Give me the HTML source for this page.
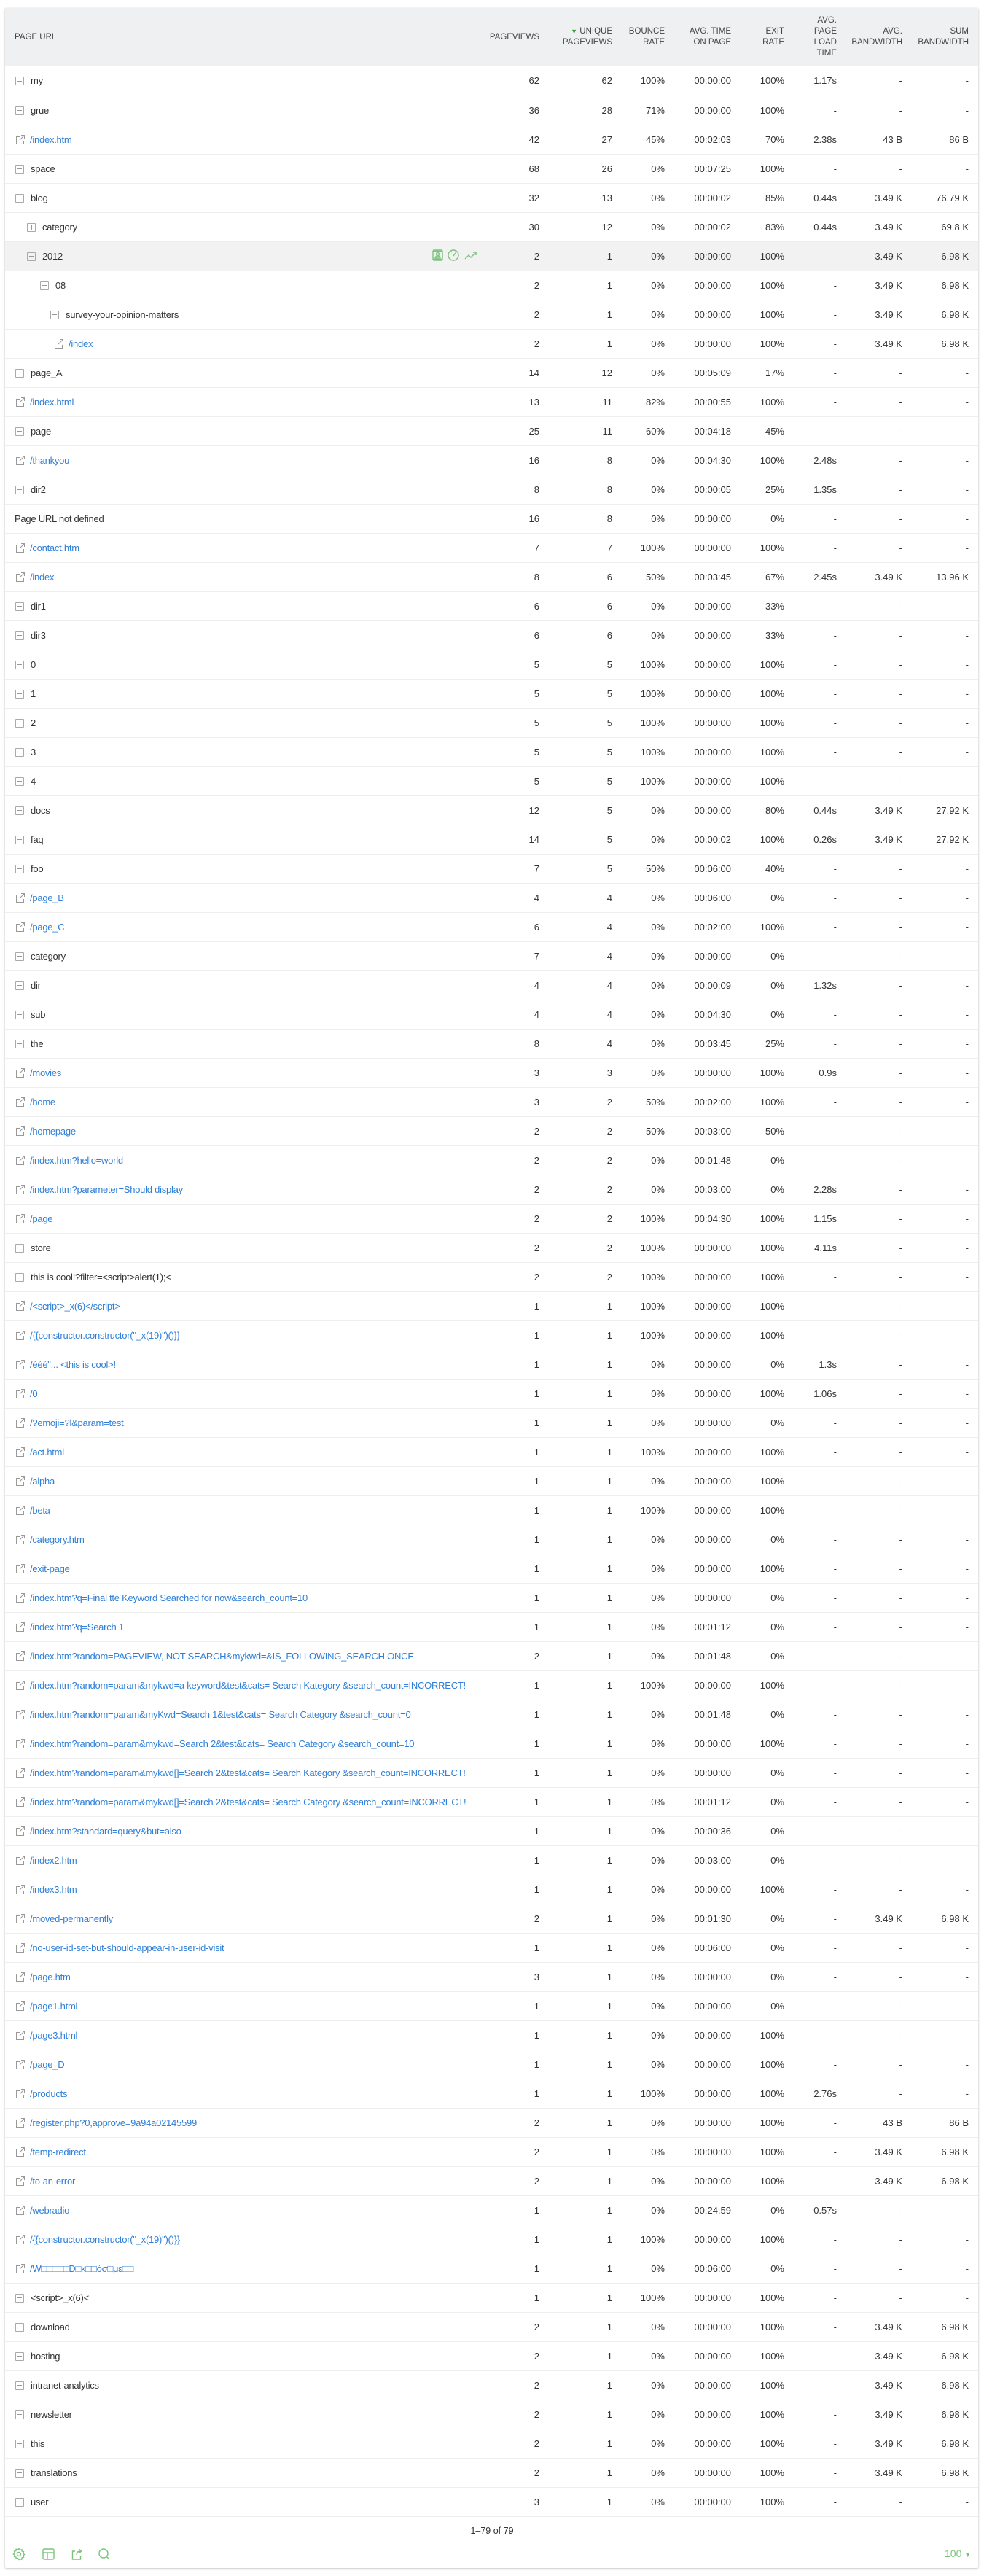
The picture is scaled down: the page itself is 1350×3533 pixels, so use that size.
<!DOCTYPE html>
<html><head><meta charset="utf-8">
<style>
*{box-sizing:border-box;margin:0;padding:0}
body{width:1350px;height:3533px;background:#fff;font-family:"Liberation Sans","Noto Sans CJK SC",sans-serif;font-size:13px;color:#333;position:relative;overflow:hidden}
.card{position:absolute;left:7px;top:11px;width:1335px;height:3511px;background:#fff;box-shadow:0 1px 3px rgba(0,0,0,.25);border-radius:2px}
table{border-collapse:collapse;table-layout:fixed;width:1335px}
th{background:#eef0f2;height:80px;font-weight:normal;font-size:11.5px;color:#444;text-transform:uppercase;text-align:right;line-height:15px;vertical-align:middle;padding:0}
th.u{text-align:left;padding-left:13px}
td{height:40px;border-bottom:1px solid #eee;text-align:right;white-space:nowrap;padding:0;vertical-align:middle}
td.u{text-align:left;overflow:visible;padding-left:14px;letter-spacing:-0.25px}
td:last-child,th:last-child{padding-right:13px}
tr.h td{background:#f2f2f2}
.b{display:inline-block;width:12px;height:12px;border:1px solid #aaa;border-radius:1px;position:relative;vertical-align:-2px;margin-right:9px}
.b:before{content:"";position:absolute;left:2px;top:4.5px;width:6px;height:1px;background:#999}
.p:after{content:"";position:absolute;left:4.5px;top:2px;width:1px;height:6px;background:#999}
.l{color:#2f7fd8}
svg.e{vertical-align:-2px;margin-right:7px}
.tri{color:#3a9a3a;font-size:9px}
.ico{position:absolute;left:593px;top:341px}
.foot{position:absolute;top:3464px;left:0;width:1350px;text-align:center;font-size:12.5px;color:#333}
.fi{position:absolute;top:3494px}
.pg{position:absolute;top:3494px;left:1296px;color:#7cc47c;font-size:14px}
</style></head><body>
<div class="card">
<table>
<colgroup><col style="width:633px"><col style="width:100px"><col style="width:100px"><col style="width:72px"><col style="width:91px"><col style="width:73px"><col style="width:72px"><col style="width:90px"><col style="width:104px"></colgroup>
<tr><th class="u">Page URL</th><th>Pageviews</th><th><span class="tri">▼</span> Unique<br>Pageviews</th><th>Bounce<br>Rate</th><th>Avg. Time<br>on Page</th><th>Exit<br>Rate</th><th>Avg.<br>Page<br>Load<br>Time</th><th>Avg.<br>Bandwidth</th><th>Sum<br>Bandwidth</th></tr>
<tr><td class="u"><span class="b p"></span>my</td><td>62</td><td>62</td><td>100%</td><td>00:00:00</td><td>100%</td><td>1.17s</td><td>-</td><td>-</td></tr>
<tr><td class="u"><span class="b p"></span>grue</td><td>36</td><td>28</td><td>71%</td><td>00:00:00</td><td>100%</td><td>-</td><td>-</td><td>-</td></tr>
<tr><td class="u l"><svg class="e" width="13" height="13" viewBox="0 0 13 13" fill="none" stroke="#999" stroke-width="1"><path d="M6 2.5H1.5v10h10V8M8 .5h4.5V5M12.5.5 6 7"/></svg>/index.htm</td><td>42</td><td>27</td><td>45%</td><td>00:02:03</td><td>70%</td><td>2.38s</td><td>43 B</td><td>86 B</td></tr>
<tr><td class="u"><span class="b p"></span>space</td><td>68</td><td>26</td><td>0%</td><td>00:07:25</td><td>100%</td><td>-</td><td>-</td><td>-</td></tr>
<tr><td class="u"><span class="b"></span>blog</td><td>32</td><td>13</td><td>0%</td><td>00:00:02</td><td>85%</td><td>0.44s</td><td>3.49 K</td><td>76.79 K</td></tr>
<tr><td class="u" style="padding-left:30px"><span class="b p"></span>category</td><td>30</td><td>12</td><td>0%</td><td>00:00:02</td><td>83%</td><td>0.44s</td><td>3.49 K</td><td>69.8 K</td></tr>
<tr class="h"><td class="u" style="padding-left:30px"><span class="b"></span>2012</td><td>2</td><td>1</td><td>0%</td><td>00:00:00</td><td>100%</td><td>-</td><td>3.49 K</td><td>6.98 K</td></tr>
<tr><td class="u" style="padding-left:48px"><span class="b"></span>08</td><td>2</td><td>1</td><td>0%</td><td>00:00:00</td><td>100%</td><td>-</td><td>3.49 K</td><td>6.98 K</td></tr>
<tr><td class="u" style="padding-left:62px"><span class="b"></span>survey-your-opinion-matters</td><td>2</td><td>1</td><td>0%</td><td>00:00:00</td><td>100%</td><td>-</td><td>3.49 K</td><td>6.98 K</td></tr>
<tr><td class="u l" style="padding-left:67px"><svg class="e" width="13" height="13" viewBox="0 0 13 13" fill="none" stroke="#999"><path d="M6 2.5H1.5v10h10V8M8 .5h4.5V5M12.5.5 6 7"/></svg>/index</td><td>2</td><td>1</td><td>0%</td><td>00:00:00</td><td>100%</td><td>-</td><td>3.49 K</td><td>6.98 K</td></tr>
<tr><td class="u"><span class="b p"></span>page_A</td><td>14</td><td>12</td><td>0%</td><td>00:05:09</td><td>17%</td><td>-</td><td>-</td><td>-</td></tr>
<tr><td class="u l"><svg class="e" width="13" height="13" viewBox="0 0 13 13" fill="none" stroke="#999"><path d="M6 2.5H1.5v10h10V8M8 .5h4.5V5M12.5.5 6 7"/></svg>/index.html</td><td>13</td><td>11</td><td>82%</td><td>00:00:55</td><td>100%</td><td>-</td><td>-</td><td>-</td></tr>
<tr><td class="u"><span class="b p"></span>page</td><td>25</td><td>11</td><td>60%</td><td>00:04:18</td><td>45%</td><td>-</td><td>-</td><td>-</td></tr>
<tr><td class="u l"><svg class="e" width="13" height="13" viewBox="0 0 13 13" fill="none" stroke="#999"><path d="M6 2.5H1.5v10h10V8M8 .5h4.5V5M12.5.5 6 7"/></svg>/thankyou</td><td>16</td><td>8</td><td>0%</td><td>00:04:30</td><td>100%</td><td>2.48s</td><td>-</td><td>-</td></tr>
<tr><td class="u"><span class="b p"></span>dir2</td><td>8</td><td>8</td><td>0%</td><td>00:00:05</td><td>25%</td><td>1.35s</td><td>-</td><td>-</td></tr>
<tr><td class="u" style="padding-left:13px">Page URL not defined</td><td>16</td><td>8</td><td>0%</td><td>00:00:00</td><td>0%</td><td>-</td><td>-</td><td>-</td></tr>
<tr><td class="u l"><svg class="e" width="13" height="13" viewBox="0 0 13 13" fill="none" stroke="#999"><path d="M6 2.5H1.5v10h10V8M8 .5h4.5V5M12.5.5 6 7"/></svg>/contact.htm</td><td>7</td><td>7</td><td>100%</td><td>00:00:00</td><td>100%</td><td>-</td><td>-</td><td>-</td></tr>
<tr><td class="u l"><svg class="e" width="13" height="13" viewBox="0 0 13 13" fill="none" stroke="#999"><path d="M6 2.5H1.5v10h10V8M8 .5h4.5V5M12.5.5 6 7"/></svg>/index</td><td>8</td><td>6</td><td>50%</td><td>00:03:45</td><td>67%</td><td>2.45s</td><td>3.49 K</td><td>13.96 K</td></tr>
<tr><td class="u"><span class="b p"></span>dir1</td><td>6</td><td>6</td><td>0%</td><td>00:00:00</td><td>33%</td><td>-</td><td>-</td><td>-</td></tr>
<tr><td class="u"><span class="b p"></span>dir3</td><td>6</td><td>6</td><td>0%</td><td>00:00:00</td><td>33%</td><td>-</td><td>-</td><td>-</td></tr>
<tr><td class="u"><span class="b p"></span>0</td><td>5</td><td>5</td><td>100%</td><td>00:00:00</td><td>100%</td><td>-</td><td>-</td><td>-</td></tr>
<tr><td class="u"><span class="b p"></span>1</td><td>5</td><td>5</td><td>100%</td><td>00:00:00</td><td>100%</td><td>-</td><td>-</td><td>-</td></tr>
<tr><td class="u"><span class="b p"></span>2</td><td>5</td><td>5</td><td>100%</td><td>00:00:00</td><td>100%</td><td>-</td><td>-</td><td>-</td></tr>
<tr><td class="u"><span class="b p"></span>3</td><td>5</td><td>5</td><td>100%</td><td>00:00:00</td><td>100%</td><td>-</td><td>-</td><td>-</td></tr>
<tr><td class="u"><span class="b p"></span>4</td><td>5</td><td>5</td><td>100%</td><td>00:00:00</td><td>100%</td><td>-</td><td>-</td><td>-</td></tr>
<tr><td class="u"><span class="b p"></span>docs</td><td>12</td><td>5</td><td>0%</td><td>00:00:00</td><td>80%</td><td>0.44s</td><td>3.49 K</td><td>27.92 K</td></tr>
<tr><td class="u"><span class="b p"></span>faq</td><td>14</td><td>5</td><td>0%</td><td>00:00:02</td><td>100%</td><td>0.26s</td><td>3.49 K</td><td>27.92 K</td></tr>
<tr><td class="u"><span class="b p"></span>foo</td><td>7</td><td>5</td><td>50%</td><td>00:06:00</td><td>40%</td><td>-</td><td>-</td><td>-</td></tr>
<tr><td class="u l"><svg class="e" width="13" height="13" viewBox="0 0 13 13" fill="none" stroke="#999"><path d="M6 2.5H1.5v10h10V8M8 .5h4.5V5M12.5.5 6 7"/></svg>/page_B</td><td>4</td><td>4</td><td>0%</td><td>00:06:00</td><td>0%</td><td>-</td><td>-</td><td>-</td></tr>
<tr><td class="u l"><svg class="e" width="13" height="13" viewBox="0 0 13 13" fill="none" stroke="#999"><path d="M6 2.5H1.5v10h10V8M8 .5h4.5V5M12.5.5 6 7"/></svg>/page_C</td><td>6</td><td>4</td><td>0%</td><td>00:02:00</td><td>100%</td><td>-</td><td>-</td><td>-</td></tr>
<tr><td class="u"><span class="b p"></span>category</td><td>7</td><td>4</td><td>0%</td><td>00:00:00</td><td>0%</td><td>-</td><td>-</td><td>-</td></tr>
<tr><td class="u"><span class="b p"></span>dir</td><td>4</td><td>4</td><td>0%</td><td>00:00:09</td><td>0%</td><td>1.32s</td><td>-</td><td>-</td></tr>
<tr><td class="u"><span class="b p"></span>sub</td><td>4</td><td>4</td><td>0%</td><td>00:04:30</td><td>0%</td><td>-</td><td>-</td><td>-</td></tr>
<tr><td class="u"><span class="b p"></span>the</td><td>8</td><td>4</td><td>0%</td><td>00:03:45</td><td>25%</td><td>-</td><td>-</td><td>-</td></tr>
<tr><td class="u l"><svg class="e" width="13" height="13" viewBox="0 0 13 13" fill="none" stroke="#999"><path d="M6 2.5H1.5v10h10V8M8 .5h4.5V5M12.5.5 6 7"/></svg>/movies</td><td>3</td><td>3</td><td>0%</td><td>00:00:00</td><td>100%</td><td>0.9s</td><td>-</td><td>-</td></tr>
<tr><td class="u l"><svg class="e" width="13" height="13" viewBox="0 0 13 13" fill="none" stroke="#999"><path d="M6 2.5H1.5v10h10V8M8 .5h4.5V5M12.5.5 6 7"/></svg>/home</td><td>3</td><td>2</td><td>50%</td><td>00:02:00</td><td>100%</td><td>-</td><td>-</td><td>-</td></tr>
<tr><td class="u l"><svg class="e" width="13" height="13" viewBox="0 0 13 13" fill="none" stroke="#999"><path d="M6 2.5H1.5v10h10V8M8 .5h4.5V5M12.5.5 6 7"/></svg>/homepage</td><td>2</td><td>2</td><td>50%</td><td>00:03:00</td><td>50%</td><td>-</td><td>-</td><td>-</td></tr>
<tr><td class="u l"><svg class="e" width="13" height="13" viewBox="0 0 13 13" fill="none" stroke="#999"><path d="M6 2.5H1.5v10h10V8M8 .5h4.5V5M12.5.5 6 7"/></svg>/index.htm?hello=world</td><td>2</td><td>2</td><td>0%</td><td>00:01:48</td><td>0%</td><td>-</td><td>-</td><td>-</td></tr>
<tr><td class="u l"><svg class="e" width="13" height="13" viewBox="0 0 13 13" fill="none" stroke="#999"><path d="M6 2.5H1.5v10h10V8M8 .5h4.5V5M12.5.5 6 7"/></svg>/index.htm?parameter=Should display</td><td>2</td><td>2</td><td>0%</td><td>00:03:00</td><td>0%</td><td>2.28s</td><td>-</td><td>-</td></tr>
<tr><td class="u l"><svg class="e" width="13" height="13" viewBox="0 0 13 13" fill="none" stroke="#999"><path d="M6 2.5H1.5v10h10V8M8 .5h4.5V5M12.5.5 6 7"/></svg>/page</td><td>2</td><td>2</td><td>100%</td><td>00:04:30</td><td>100%</td><td>1.15s</td><td>-</td><td>-</td></tr>
<tr><td class="u"><span class="b p"></span>store</td><td>2</td><td>2</td><td>100%</td><td>00:00:00</td><td>100%</td><td>4.11s</td><td>-</td><td>-</td></tr>
<tr><td class="u"><span class="b p"></span>this is cool!?filter=&lt;script&gt;alert(1);&lt;</td><td>2</td><td>2</td><td>100%</td><td>00:00:00</td><td>100%</td><td>-</td><td>-</td><td>-</td></tr>
<tr><td class="u l"><svg class="e" width="13" height="13" viewBox="0 0 13 13" fill="none" stroke="#999"><path d="M6 2.5H1.5v10h10V8M8 .5h4.5V5M12.5.5 6 7"/></svg>/&lt;script&gt;_x(6)&lt;/script&gt;</td><td>1</td><td>1</td><td>100%</td><td>00:00:00</td><td>100%</td><td>-</td><td>-</td><td>-</td></tr>
<tr><td class="u l"><svg class="e" width="13" height="13" viewBox="0 0 13 13" fill="none" stroke="#999"><path d="M6 2.5H1.5v10h10V8M8 .5h4.5V5M12.5.5 6 7"/></svg>/{{constructor.constructor("_x(19)")()}}</td><td>1</td><td>1</td><td>100%</td><td>00:00:00</td><td>100%</td><td>-</td><td>-</td><td>-</td></tr>
<tr><td class="u l"><svg class="e" width="13" height="13" viewBox="0 0 13 13" fill="none" stroke="#999"><path d="M6 2.5H1.5v10h10V8M8 .5h4.5V5M12.5.5 6 7"/></svg>/ééé"... &lt;this is cool&gt;!</td><td>1</td><td>1</td><td>0%</td><td>00:00:00</td><td>0%</td><td>1.3s</td><td>-</td><td>-</td></tr>
<tr><td class="u l"><svg class="e" width="13" height="13" viewBox="0 0 13 13" fill="none" stroke="#999"><path d="M6 2.5H1.5v10h10V8M8 .5h4.5V5M12.5.5 6 7"/></svg>/0</td><td>1</td><td>1</td><td>0%</td><td>00:00:00</td><td>100%</td><td>1.06s</td><td>-</td><td>-</td></tr>
<tr><td class="u l"><svg class="e" width="13" height="13" viewBox="0 0 13 13" fill="none" stroke="#999"><path d="M6 2.5H1.5v10h10V8M8 .5h4.5V5M12.5.5 6 7"/></svg>/?emoji=?l&amp;param=test</td><td>1</td><td>1</td><td>0%</td><td>00:00:00</td><td>0%</td><td>-</td><td>-</td><td>-</td></tr>
<tr><td class="u l"><svg class="e" width="13" height="13" viewBox="0 0 13 13" fill="none" stroke="#999"><path d="M6 2.5H1.5v10h10V8M8 .5h4.5V5M12.5.5 6 7"/></svg>/act.html</td><td>1</td><td>1</td><td>100%</td><td>00:00:00</td><td>100%</td><td>-</td><td>-</td><td>-</td></tr>
<tr><td class="u l"><svg class="e" width="13" height="13" viewBox="0 0 13 13" fill="none" stroke="#999"><path d="M6 2.5H1.5v10h10V8M8 .5h4.5V5M12.5.5 6 7"/></svg>/alpha</td><td>1</td><td>1</td><td>0%</td><td>00:00:00</td><td>100%</td><td>-</td><td>-</td><td>-</td></tr>
<tr><td class="u l"><svg class="e" width="13" height="13" viewBox="0 0 13 13" fill="none" stroke="#999"><path d="M6 2.5H1.5v10h10V8M8 .5h4.5V5M12.5.5 6 7"/></svg>/beta</td><td>1</td><td>1</td><td>100%</td><td>00:00:00</td><td>100%</td><td>-</td><td>-</td><td>-</td></tr>
<tr><td class="u l"><svg class="e" width="13" height="13" viewBox="0 0 13 13" fill="none" stroke="#999"><path d="M6 2.5H1.5v10h10V8M8 .5h4.5V5M12.5.5 6 7"/></svg>/category.htm</td><td>1</td><td>1</td><td>0%</td><td>00:00:00</td><td>0%</td><td>-</td><td>-</td><td>-</td></tr>
<tr><td class="u l"><svg class="e" width="13" height="13" viewBox="0 0 13 13" fill="none" stroke="#999"><path d="M6 2.5H1.5v10h10V8M8 .5h4.5V5M12.5.5 6 7"/></svg>/exit-page</td><td>1</td><td>1</td><td>0%</td><td>00:00:00</td><td>100%</td><td>-</td><td>-</td><td>-</td></tr>
<tr><td class="u l"><svg class="e" width="13" height="13" viewBox="0 0 13 13" fill="none" stroke="#999"><path d="M6 2.5H1.5v10h10V8M8 .5h4.5V5M12.5.5 6 7"/></svg>/index.htm?q=Final tte Keyword Searched for now&amp;search_count=10</td><td>1</td><td>1</td><td>0%</td><td>00:00:00</td><td>0%</td><td>-</td><td>-</td><td>-</td></tr>
<tr><td class="u l"><svg class="e" width="13" height="13" viewBox="0 0 13 13" fill="none" stroke="#999"><path d="M6 2.5H1.5v10h10V8M8 .5h4.5V5M12.5.5 6 7"/></svg>/index.htm?q=Search 1</td><td>1</td><td>1</td><td>0%</td><td>00:01:12</td><td>0%</td><td>-</td><td>-</td><td>-</td></tr>
<tr><td class="u l"><svg class="e" width="13" height="13" viewBox="0 0 13 13" fill="none" stroke="#999"><path d="M6 2.5H1.5v10h10V8M8 .5h4.5V5M12.5.5 6 7"/></svg>/index.htm?random=PAGEVIEW, NOT SEARCH&amp;mykwd=&amp;IS_FOLLOWING_SEARCH ONCE</td><td>2</td><td>1</td><td>0%</td><td>00:01:48</td><td>0%</td><td>-</td><td>-</td><td>-</td></tr>
<tr><td class="u l"><svg class="e" width="13" height="13" viewBox="0 0 13 13" fill="none" stroke="#999"><path d="M6 2.5H1.5v10h10V8M8 .5h4.5V5M12.5.5 6 7"/></svg>/index.htm?random=param&amp;mykwd=a keyword&amp;test&amp;cats= Search Kategory &amp;search_count=INCORRECT!</td><td>1</td><td>1</td><td>100%</td><td>00:00:00</td><td>100%</td><td>-</td><td>-</td><td>-</td></tr>
<tr><td class="u l"><svg class="e" width="13" height="13" viewBox="0 0 13 13" fill="none" stroke="#999"><path d="M6 2.5H1.5v10h10V8M8 .5h4.5V5M12.5.5 6 7"/></svg>/index.htm?random=param&amp;myKwd=Search 1&amp;test&amp;cats= Search Category &amp;search_count=0</td><td>1</td><td>1</td><td>0%</td><td>00:01:48</td><td>0%</td><td>-</td><td>-</td><td>-</td></tr>
<tr><td class="u l"><svg class="e" width="13" height="13" viewBox="0 0 13 13" fill="none" stroke="#999"><path d="M6 2.5H1.5v10h10V8M8 .5h4.5V5M12.5.5 6 7"/></svg>/index.htm?random=param&amp;mykwd=Search 2&amp;test&amp;cats= Search Category &amp;search_count=10</td><td>1</td><td>1</td><td>0%</td><td>00:00:00</td><td>100%</td><td>-</td><td>-</td><td>-</td></tr>
<tr><td class="u l"><svg class="e" width="13" height="13" viewBox="0 0 13 13" fill="none" stroke="#999"><path d="M6 2.5H1.5v10h10V8M8 .5h4.5V5M12.5.5 6 7"/></svg>/index.htm?random=param&amp;mykwd[]=Search 2&amp;test&amp;cats= Search Kategory &amp;search_count=INCORRECT!</td><td>1</td><td>1</td><td>0%</td><td>00:00:00</td><td>0%</td><td>-</td><td>-</td><td>-</td></tr>
<tr><td class="u l"><svg class="e" width="13" height="13" viewBox="0 0 13 13" fill="none" stroke="#999"><path d="M6 2.5H1.5v10h10V8M8 .5h4.5V5M12.5.5 6 7"/></svg>/index.htm?random=param&amp;mykwd[]=Search 2&amp;test&amp;cats= Search Category &amp;search_count=INCORRECT!</td><td>1</td><td>1</td><td>0%</td><td>00:01:12</td><td>0%</td><td>-</td><td>-</td><td>-</td></tr>
<tr><td class="u l"><svg class="e" width="13" height="13" viewBox="0 0 13 13" fill="none" stroke="#999"><path d="M6 2.5H1.5v10h10V8M8 .5h4.5V5M12.5.5 6 7"/></svg>/index.htm?standard=query&amp;but=also</td><td>1</td><td>1</td><td>0%</td><td>00:00:36</td><td>0%</td><td>-</td><td>-</td><td>-</td></tr>
<tr><td class="u l"><svg class="e" width="13" height="13" viewBox="0 0 13 13" fill="none" stroke="#999"><path d="M6 2.5H1.5v10h10V8M8 .5h4.5V5M12.5.5 6 7"/></svg>/index2.htm</td><td>1</td><td>1</td><td>0%</td><td>00:03:00</td><td>0%</td><td>-</td><td>-</td><td>-</td></tr>
<tr><td class="u l"><svg class="e" width="13" height="13" viewBox="0 0 13 13" fill="none" stroke="#999"><path d="M6 2.5H1.5v10h10V8M8 .5h4.5V5M12.5.5 6 7"/></svg>/index3.htm</td><td>1</td><td>1</td><td>0%</td><td>00:00:00</td><td>100%</td><td>-</td><td>-</td><td>-</td></tr>
<tr><td class="u l"><svg class="e" width="13" height="13" viewBox="0 0 13 13" fill="none" stroke="#999"><path d="M6 2.5H1.5v10h10V8M8 .5h4.5V5M12.5.5 6 7"/></svg>/moved-permanently</td><td>2</td><td>1</td><td>0%</td><td>00:01:30</td><td>0%</td><td>-</td><td>3.49 K</td><td>6.98 K</td></tr>
<tr><td class="u l"><svg class="e" width="13" height="13" viewBox="0 0 13 13" fill="none" stroke="#999"><path d="M6 2.5H1.5v10h10V8M8 .5h4.5V5M12.5.5 6 7"/></svg>/no-user-id-set-but-should-appear-in-user-id-visit</td><td>1</td><td>1</td><td>0%</td><td>00:06:00</td><td>0%</td><td>-</td><td>-</td><td>-</td></tr>
<tr><td class="u l"><svg class="e" width="13" height="13" viewBox="0 0 13 13" fill="none" stroke="#999"><path d="M6 2.5H1.5v10h10V8M8 .5h4.5V5M12.5.5 6 7"/></svg>/page.htm</td><td>3</td><td>1</td><td>0%</td><td>00:00:00</td><td>0%</td><td>-</td><td>-</td><td>-</td></tr>
<tr><td class="u l"><svg class="e" width="13" height="13" viewBox="0 0 13 13" fill="none" stroke="#999"><path d="M6 2.5H1.5v10h10V8M8 .5h4.5V5M12.5.5 6 7"/></svg>/page1.html</td><td>1</td><td>1</td><td>0%</td><td>00:00:00</td><td>0%</td><td>-</td><td>-</td><td>-</td></tr>
<tr><td class="u l"><svg class="e" width="13" height="13" viewBox="0 0 13 13" fill="none" stroke="#999"><path d="M6 2.5H1.5v10h10V8M8 .5h4.5V5M12.5.5 6 7"/></svg>/page3.html</td><td>1</td><td>1</td><td>0%</td><td>00:00:00</td><td>100%</td><td>-</td><td>-</td><td>-</td></tr>
<tr><td class="u l"><svg class="e" width="13" height="13" viewBox="0 0 13 13" fill="none" stroke="#999"><path d="M6 2.5H1.5v10h10V8M8 .5h4.5V5M12.5.5 6 7"/></svg>/page_D</td><td>1</td><td>1</td><td>0%</td><td>00:00:00</td><td>100%</td><td>-</td><td>-</td><td>-</td></tr>
<tr><td class="u l"><svg class="e" width="13" height="13" viewBox="0 0 13 13" fill="none" stroke="#999"><path d="M6 2.5H1.5v10h10V8M8 .5h4.5V5M12.5.5 6 7"/></svg>/products</td><td>1</td><td>1</td><td>100%</td><td>00:00:00</td><td>100%</td><td>2.76s</td><td>-</td><td>-</td></tr>
<tr><td class="u l"><svg class="e" width="13" height="13" viewBox="0 0 13 13" fill="none" stroke="#999"><path d="M6 2.5H1.5v10h10V8M8 .5h4.5V5M12.5.5 6 7"/></svg>/register.php?0,approve=9a94a02145599</td><td>2</td><td>1</td><td>0%</td><td>00:00:00</td><td>100%</td><td>-</td><td>43 B</td><td>86 B</td></tr>
<tr><td class="u l"><svg class="e" width="13" height="13" viewBox="0 0 13 13" fill="none" stroke="#999"><path d="M6 2.5H1.5v10h10V8M8 .5h4.5V5M12.5.5 6 7"/></svg>/temp-redirect</td><td>2</td><td>1</td><td>0%</td><td>00:00:00</td><td>100%</td><td>-</td><td>3.49 K</td><td>6.98 K</td></tr>
<tr><td class="u l"><svg class="e" width="13" height="13" viewBox="0 0 13 13" fill="none" stroke="#999"><path d="M6 2.5H1.5v10h10V8M8 .5h4.5V5M12.5.5 6 7"/></svg>/to-an-error</td><td>2</td><td>1</td><td>0%</td><td>00:00:00</td><td>100%</td><td>-</td><td>3.49 K</td><td>6.98 K</td></tr>
<tr><td class="u l"><svg class="e" width="13" height="13" viewBox="0 0 13 13" fill="none" stroke="#999"><path d="M6 2.5H1.5v10h10V8M8 .5h4.5V5M12.5.5 6 7"/></svg>/webradio</td><td>1</td><td>1</td><td>0%</td><td>00:24:59</td><td>0%</td><td>0.57s</td><td>-</td><td>-</td></tr>
<tr><td class="u l"><svg class="e" width="13" height="13" viewBox="0 0 13 13" fill="none" stroke="#999"><path d="M6 2.5H1.5v10h10V8M8 .5h4.5V5M12.5.5 6 7"/></svg>/{{constructor.constructor("_x(19)")()}}</td><td>1</td><td>1</td><td>100%</td><td>00:00:00</td><td>100%</td><td>-</td><td>-</td><td>-</td></tr>
<tr><td class="u l"><svg class="e" width="13" height="13" viewBox="0 0 13 13" fill="none" stroke="#999"><path d="M6 2.5H1.5v10h10V8M8 .5h4.5V5M12.5.5 6 7"/></svg>/W□□□□□D□κ□□όσ□με□□</td><td>1</td><td>1</td><td>0%</td><td>00:06:00</td><td>0%</td><td>-</td><td>-</td><td>-</td></tr>
<tr><td class="u"><span class="b p"></span>&lt;script&gt;_x(6)&lt;</td><td>1</td><td>1</td><td>100%</td><td>00:00:00</td><td>100%</td><td>-</td><td>-</td><td>-</td></tr>
<tr><td class="u"><span class="b p"></span>download</td><td>2</td><td>1</td><td>0%</td><td>00:00:00</td><td>100%</td><td>-</td><td>3.49 K</td><td>6.98 K</td></tr>
<tr><td class="u"><span class="b p"></span>hosting</td><td>2</td><td>1</td><td>0%</td><td>00:00:00</td><td>100%</td><td>-</td><td>3.49 K</td><td>6.98 K</td></tr>
<tr><td class="u"><span class="b p"></span>intranet-analytics</td><td>2</td><td>1</td><td>0%</td><td>00:00:00</td><td>100%</td><td>-</td><td>3.49 K</td><td>6.98 K</td></tr>
<tr><td class="u"><span class="b p"></span>newsletter</td><td>2</td><td>1</td><td>0%</td><td>00:00:00</td><td>100%</td><td>-</td><td>3.49 K</td><td>6.98 K</td></tr>
<tr><td class="u"><span class="b p"></span>this</td><td>2</td><td>1</td><td>0%</td><td>00:00:00</td><td>100%</td><td>-</td><td>3.49 K</td><td>6.98 K</td></tr>
<tr><td class="u"><span class="b p"></span>translations</td><td>2</td><td>1</td><td>0%</td><td>00:00:00</td><td>100%</td><td>-</td><td>3.49 K</td><td>6.98 K</td></tr>
<tr><td class="u"><span class="b p"></span>user</td><td>3</td><td>1</td><td>0%</td><td>00:00:00</td><td>100%</td><td>-</td><td>-</td><td>-</td></tr>
</table>
</div>
<svg class="ico" width="66" height="18" viewBox="0 0 66 18" fill="none" stroke="#7cc47c" stroke-width="1.4"><rect x="1" y="2" width="13" height="14" rx="1.5"/><path d="M1 3.5h13M1 14.5h13"/><circle cx="7.5" cy="7.5" r="2"/><path d="M4 13c0-2 1.5-3 3.5-3s3.5 1 3.5 3z"/><circle cx="29" cy="9" r="7"/><path d="M29 10l3-4M26 4l1 1M32 4l-1 1"/><path d="M45 14l5-5 3 3 7-7M56 5h4v4"/></svg>
<div class="foot">1–79 of 79</div>
<svg class="fi" style="left:17px" width="140" height="18" viewBox="0 0 140 18" fill="none" stroke="#7cc47c" stroke-width="1.4">
<circle cx="9" cy="9" r="2.5"/><path d="M9 1.5l1.5 2 2.3-.8.3 2.4 2.4.5-.8 2.3 1.8 1.6-1.8 1.6.8 2.3-2.4.5-.3 2.4-2.3-.8L9 16.5l-1.5-2-2.3.8-.3-2.4-2.4-.5.8-2.3L1.5 9l1.8-1.6-.8-2.3 2.4-.5.3-2.4 2.3.8z"/>
<rect x="42" y="2" width="15" height="14" rx="1.5"/><path d="M42 7h15M48 7v9"/>
<path d="M86 5h-3.5v11h11v-4M88 10c0-4 3-5 6-5M92 2.5l2.5 2.5-2.5 2.5"/>
<circle cx="125" cy="8" r="6"/><path d="M129.5 12.5l3.5 3.5"/>
</svg>
<div class="pg">100 <span style="font-size:9px">▼</span></div>
</body></html>
